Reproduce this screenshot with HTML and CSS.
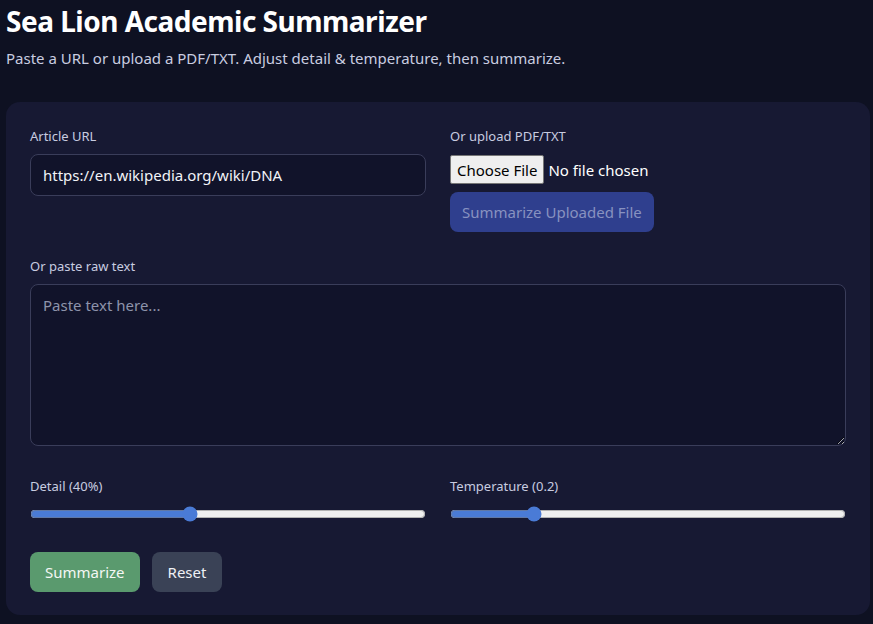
FILE: index.html
```html
<!DOCTYPE html>
<html lang="en">
<head>
<meta charset="utf-8">
<title>Sea Lion Academic Summarizer</title>
<link rel="stylesheet" href="styles.css">
</head>
<body>
<div class="page">
  <header class="head">
    <h1 class="title">Sea Lion Academic Summarizer</h1>
    <p class="subtitle">Paste a URL or upload a PDF/TXT. Adjust detail &amp; temperature, then summarize.</p>
  </header>
  <main class="card">
    <div class="grid">
      <div class="field">
        <label class="label" for="url">Article URL</label>
        <input class="text-input" id="url" type="text" value="https://en.wikipedia.org/wiki/DNA">
      </div>
      <div class="field">
        <label class="label" for="file">Or upload PDF/TXT</label>
        <input class="file-input" id="file" type="file">
        <button class="btn btn-upload" disabled>Summarize Uploaded File</button>
      </div>
      <div class="field span">
        <label class="label" for="raw">Or paste raw text</label>
        <textarea class="textarea" id="raw" placeholder="Paste text here..."></textarea>
      </div>
      <div class="field">
        <label class="label" for="detail">Detail (40%)</label>
        <input class="range" id="detail" type="range" min="0" max="100" value="40">
      </div>
      <div class="field">
        <label class="label" for="temp">Temperature (0.2)</label>
        <input class="range" id="temp" type="range" min="0" max="1" step="0.1" value="0.2">
      </div>
    </div>
    <div class="actions">
      <button class="btn btn-go">Summarize</button>
      <button class="btn btn-reset">Reset</button>
    </div>
  </main>
</div>
</body>
</html>
```

FILE: styles.css
```css
html, body {
  margin: 0;
  padding: 0;
  background: #0e1122;
  height: 100%;
}
body {
  font-family: "Noto Sans", "Open Sans", sans-serif;
  color: #e6e8f2;
}
.page {
  padding: 0 3px 0 6px;
}
.head {
  padding-top: 2px;
}
.title {
  margin: 0;
  font-size: 28px;
  line-height: 38px;
  font-weight: 700;
  color: #ffffff;
  letter-spacing: -0.5px;
}
.subtitle {
  margin: 8px 0 0;
  font-size: 15px;
  line-height: 20px;
  color: #c9cde0;
}
.card {
  margin-top: 34px;
  background: #171933;
  border-radius: 14px;
  padding: 24px 24px 23px;
}
.grid {
  display: grid;
  grid-template-columns: 1fr 1fr;
  column-gap: 24px;
  row-gap: 24px;
}
.field {
  display: flex;
  flex-direction: column;
  align-items: flex-start;
}
.span {
  grid-column: 1 / span 2;
}
.label {
  font-size: 13px;
  line-height: 20px;
  color: #c8cce0;
  margin-bottom: 8px;
}
.text-input {
  box-sizing: border-box;
  width: 100%;
  height: 42px;
  background: #11132a;
  border: 1px solid #3a3d5a;
  border-radius: 8px;
  color: #f2f3f8;
  font-family: inherit;
  font-size: 15px;
  padding: 0 12px;
  outline: none;
}
.file-input {
  font-family: inherit;
  font-size: 15px;
  color: #ffffff;
  margin: 1px 0 0;
  height: 29px;
}
.file-input::file-selector-button {
  font-family: inherit;
  font-size: 15px;
  background: #efefef;
  color: #000;
  border: 1px solid #767676;
  border-radius: 2px;
  padding: 1px 6px;
  margin-right: 4px;
  height: 29px;
}
.btn {
  font-family: inherit;
  font-size: 15px;
  border: none;
  border-radius: 8px;
  height: 40px;
  padding: 0 12px;
  cursor: pointer;
}
.btn-upload {
  margin-top: 8px;
  background: #2f3f8e;
  color: #8892c0;
  cursor: default;
}
.textarea {
  box-sizing: border-box;
  width: 100%;
  height: 162px;
  background: #11132a;
  border: 1px solid #3a3d5a;
  border-radius: 8px;
  color: #f2f3f8;
  font-family: inherit;
  font-size: 15px;
  padding: 10px 12px;
  resize: vertical;
  outline: none;
  display: block;
  margin-bottom: 6px;
}
.textarea::placeholder {
  color: #8e93ab;
}
.range {
  width: 100%;
  margin: 2px 0 0;
  height: 16px;
  accent-color: #4a7bd6;
}
.actions {
  display: flex;
  gap: 12px;
  margin-top: 30px;
}
.btn-go {
  background: #5a9a6e;
  color: #f4f7f4;
  padding: 0 15px;
}
.btn-reset {
  background: #3a4256;
  color: #eef0f5;
  padding: 0 16px;
}
```
